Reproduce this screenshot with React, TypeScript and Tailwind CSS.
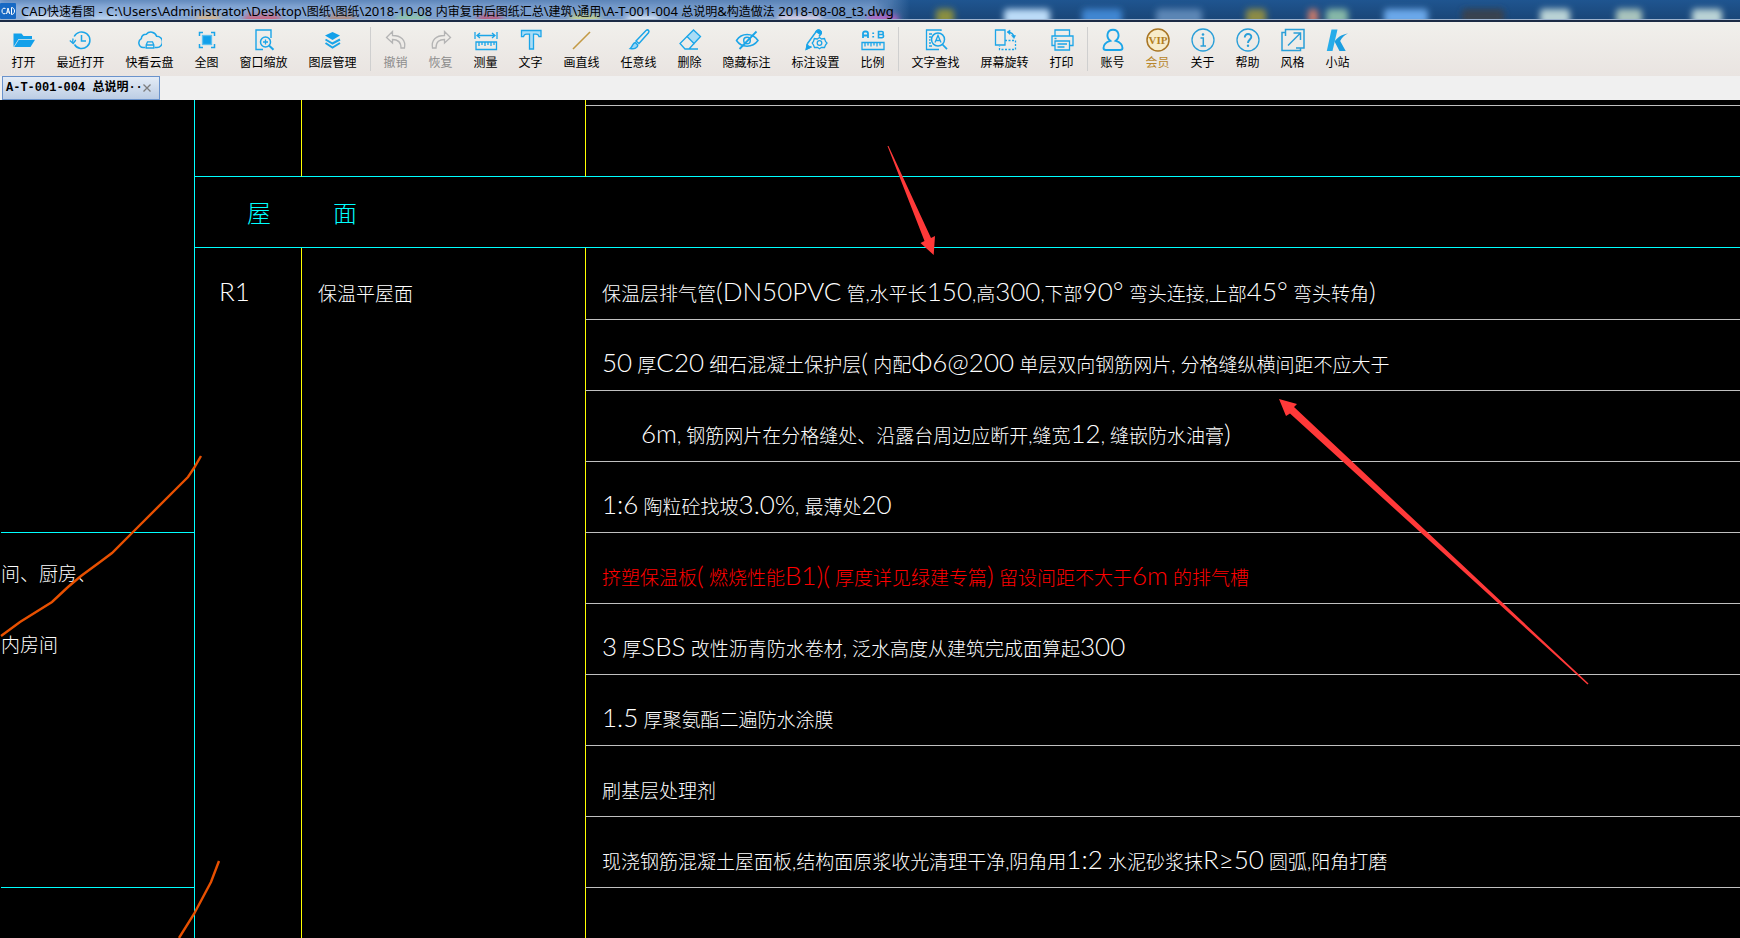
import { Fragment, type ReactNode } from "react";

type Tone = "normal" | "disabled" | "gold";

type Tool = {
  label: string;
  icon: ReactNode;
  tone?: Tone;
};

const TONES: Record<Tone, string> = {
  normal: "text-black",
  disabled: "text-[#8c8c8c]",
  gold: "text-[#b8862b]",
};

// button width depends on how many characters the label has
const WIDTHS: Record<number, string> = {
  2: "w-[45px]",
  3: "w-[57px]",
  4: "w-[69px]",
};

function Icon({ children, color = "#1ba5e8" }: { children: ReactNode; color?: string }) {
  return (
    <svg
      viewBox="0 0 24 24"
      className="h-6 w-6"
      fill="none"
      stroke={color}
      strokeWidth="1.3"
      aria-hidden="true"
    >
      {children}
    </svg>
  );
}

const GROUPS: Tool[][] = [
  [
    {
      label: "打开",
      icon: (
        <Icon>
          <path d="M1.5 19V5.5h8l2 2.5h8.500v3H6.500L1.500 19Z" fill="#12a0ea" stroke="none" />
          <path d="M6.800 11.800H23L18.500 19H2.200Z" fill="#12a0ea" stroke="none" />
        </Icon>
      ),
    },
    {
      label: "最近打开",
      icon: (
        <Icon>
          <path d="M5.200 8.500A8.300 8.300 0 1 1 5.500 16.500" strokeWidth="1.500" />
          <path d="M0.800 12.500 4.200 15.500 6.800 12" />
          <path d="M4 15c-.5-1.500-.3-3 .1-4.500" />
          <path d="M12.500 7v6h4.500" strokeWidth="1.500" />
        </Icon>
      ),
    },
    {
      label: "快看云盘",
      icon: (
        <Icon>
          <path
            d="M7.500 19.500H5.200A4.700 4.700 0 0 1 3.300 10.700 5 5 0 0 1 8.300 6.300 6 6 0 0 1 18.600 8.200 5.300 5.300 0 0 1 19 19.500H16.500"
            strokeWidth="1.500"
          />
          <path d="M8.200 20v-3l1.300-3.200h5l1.300 3.200v3ZM8.200 17h7.600" />
        </Icon>
      ),
    },
    {
      label: "全图",
      icon: (
        <Icon>
          <rect x="7.500" y="7.500" width="9" height="9" fill="#12a0ea" stroke="#5cc0f0" />
          <path d="M4.500 8V4.500H8M16 4.500h3.500V8M19.500 16v3.500H16M8 19.500H4.500V16" strokeWidth="1.500" />
        </Icon>
      ),
    },
    {
      label: "窗口缩放",
      icon: (
        <Icon>
          <path d="M11 21.500H4V2h15v8" strokeWidth="1.400" />
          <circle cx="13.500" cy="14" r="5" strokeWidth="1.500" />
          <path d="M11 14h5M13.500 11.500v5" />
          <path d="m17 17.500 4.500 4.200" strokeWidth="2" />
        </Icon>
      ),
    },
    {
      label: "图层管理",
      icon: (
        <Icon>
          <path d="m11.500 4 7.500 3.500-7.500 4.500L4 7.500Z" fill="#12a0ea" stroke="none" />
          <path d="M4.500 11.500 11.500 15.500 19 11.500M4.500 15 11.500 19.500 19 15" strokeWidth="2" />
        </Icon>
      ),
    },
  ],
  [
    {
      label: "撤销",
      tone: "disabled",
      icon: (
        <Icon color="#b4b4b4">
          <path d="M8.500 3.500 2.500 9.500 8.500 15V11.500c5 0 8.500 2 8.500 8.500h3.500C22 12 17 7.500 8.500 7.500Z" />
        </Icon>
      ),
    },
    {
      label: "恢复",
      tone: "disabled",
      icon: (
        <Icon color="#b4b4b4">
          <path d="M15.500 3.500 21.500 9.500 15.500 15V11.500c-5 0-8.500 2-8.500 8.500H3.500C2 12 7 7.500 15.500 7.500Z" />
        </Icon>
      ),
    },
    {
      label: "测量",
      icon: (
        <Icon>
          <path d="M1 4v7M23 4v7M3 7.500h18M6 5 3 7.500 6 10M18 5l3 2.500L18 10" />
          <path d="M2 14h20.500v7.500H2ZM5 14v4M8 14v3M11 14v4M14 14v3M17 14v4M20 14v3" />
        </Icon>
      ),
    },
    {
      label: "文字",
      icon: (
        <Icon>
          <path
            d="M2.500 2.500H22v6.200h-2c-.4-2-1.300-2.500-3-2.500h-2.500V21h-4V6.200H7.500c-1.700 0-2.500.5-3 2.500h-2Z"
            fill="#a9dcf6"
          />
        </Icon>
      ),
    },
    {
      label: "画直线",
      icon: (
        <Icon>
          <path d="M3 21 20 4" stroke="#c39a45" strokeWidth="1.600" />
        </Icon>
      ),
    },
    {
      label: "任意线",
      icon: (
        <Icon>
          <path d="M9 13 19 2.500c2-1.500 3.800.3 2.500 2.300L12 15.500Z" strokeWidth="1.500" />
          <path d="M8.300 14.500c-3 .5-2 3.500-5 6 4 .8 7.500-.5 7.500-3.500Z" fill="#9ad6f6" strokeWidth="1.500" />
        </Icon>
      ),
    },
    {
      label: "删除",
      icon: (
        <Icon>
          <path d="M9 8.500 15.500 2 22.500 8.500 16 15.500Z" fill="#a9dcf6" />
          <path d="m9 8.500-7 7 5 5.500h4l5-5.500M7 21h13" />
        </Icon>
      ),
    },
    {
      label: "隐藏标注",
      icon: (
        <Icon>
          <path d="M1.500 12.500c5-8 16-8 21.500 0-5.500 7.500-16.500 7.500-21.500 0Z" strokeWidth="1.500" />
          <circle cx="12" cy="12.500" r="3.300" strokeWidth="1.500" />
          <path d="M21.500 3.500 4.500 21" strokeWidth="1.800" />
        </Icon>
      ),
    },
    {
      label: "标注设置",
      icon: (
        <Icon>
          <path d="M3.500 15.500 13 2.500c2-1.500 5 .5 4.300 3L15 8.500M3.500 15.500 2.500 21l5-2.500" strokeWidth="1.500" />
          <path d="M13 2.500c2-1.500 5 .5 4.300 3l-1 1-4.300-3ZM3 17l-.8 4.500 4.300-2Z" fill="#12a0ea" />
          <path d="m15.500 9.500 2 1.500 3-.5 1 3 1.500 1.500-1.500 2-1 2.500-3-.2-2 1.500-2-1.500-3 .2-1-2.500L8.200 15l1.300-1.500.8-3 3 .5Z" />
          <circle cx="15.500" cy="15" r="2.300" />
        </Icon>
      ),
    },
    {
      label: "比例",
      icon: (
        <Icon>
          <path d="M2 10V5.500C2 4 2.800 3.500 4 3.500h1C6.300 3.500 7 4 7 5.500V10M2 7.500h5" strokeWidth="1.800" />
          <path d="M17.500 3.500h3.300c2 0 2 3 0 3h-3.300 3.600c2 0 2 3.200 0 3.200h-3.600Z" strokeWidth="1.600" />
          <path d="M12.200 4.500v1.500M12.200 8v1.500" strokeWidth="1.800" />
          <path d="M1 14.500h22v7H1ZM4 14.500v4M7 14.500v3M10 14.500v4M13 14.500v3M16 14.500v4M19 14.500v3" />
        </Icon>
      ),
    },
  ],
  [
    {
      label: "文字查找",
      icon: (
        <Icon>
          <path d="M17 3V2H2.500v19.500H15M5 6h3M5 9h2M5 12h1.500M5 15h2M5 18h3" />
          <circle cx="14" cy="11.500" r="6.500" strokeWidth="1.500" />
          <path d="M11 14.500 14 7.500l3 7M12 12.500h4" />
          <path d="m18.500 16.500 4.500 4.700" strokeWidth="1.800" />
        </Icon>
      ),
    },
    {
      label: "屏幕旋转",
      icon: (
        <Icon>
          <path d="M2.500 2h9.500v15H2.500Z" />
          <path d="M12 12.500h10.500v9H6.500V18" strokeDasharray="2 1.500" />
          <path d="M15 4c3.500.5 5.500 2 6 5" />
          <path d="m17 2-3 2 3 2.500ZM18.500 7.500h4L21 10.500Z" fill="#12a0ea" strokeWidth=".6" />
        </Icon>
      ),
    },
    {
      label: "打印",
      icon: (
        <Icon>
          <path d="M5 8V2h14.500v6M5 17.500H2V8h21v9.500h-3.500" />
          <path d="M5 13h14.500v9H5ZM7.500 16h9.500M7.500 19h7M4.500 10.500h2" />
        </Icon>
      ),
    },
  ],
  [
    {
      label: "账号",
      icon: (
        <Icon>
          <path
            d="M9.300 12.800C4.500 9 6 1.800 12 1.800S19.500 9 14.700 12.800c4 1.200 6.800 4.200 6.800 7.200 0 1.500-.8 2-2.500 2H5c-1.700 0-2.500-.5-2.500-2 0-3 2.800-6 6.800-7.200Z"
            strokeWidth="1.900"
          />
        </Icon>
      ),
    },
    {
      label: "会员",
      tone: "gold",
      icon: (
        <svg viewBox="0 0 24 24" className="h-6 w-6" aria-hidden="true">
          <circle cx="12" cy="12" r="11" fill="#f7eccb" stroke="#a87524" strokeWidth="1.500" />
          <text
            x="12"
            y="16"
            textAnchor="middle"
            fontSize="11"
            fontWeight="700"
            fontFamily="'Liberation Serif', serif"
            fill="#b3801f"
          >
            VIP
          </text>
        </svg>
      ),
    },
    {
      label: "关于",
      icon: (
        <Icon color="#2a9fd8">
          <circle cx="12" cy="12" r="11" />
          <path d="M9.500 10h2.800v8M9.500 18h5.500" strokeWidth="1.500" />
          <circle cx="12" cy="6.500" r="1.300" fill="#2a9fd8" stroke="none" />
        </Icon>
      ),
    },
    {
      label: "帮助",
      icon: (
        <Icon color="#2a9fd8">
          <circle cx="12" cy="12" r="11" />
          <path d="M8.800 9.500C8.500 5 15.500 5 15.300 9c0 2.500-3.300 2.700-3.300 6" strokeWidth="1.900" />
          <circle cx="12" cy="17.800" r="1.200" fill="#2a9fd8" stroke="none" />
        </Icon>
      ),
    },
    {
      label: "风格",
      icon: (
        <Icon color="#2a9fd8">
          <path d="M4.500 8V1.500H23V20h-8M19.500 20v2.500H1V4.500h3.500" strokeWidth="1.500" />
          <path d="M7 17.500 19 5.500M12.500 5H19.500v7" strokeWidth="1.500" />
        </Icon>
      ),
    },
    {
      label: "小站",
      icon: (
        <Icon>
          <path d="M5.500 1.500h6L6.500 23H.8Z" fill="#27ace9" stroke="none" />
          <path
            d="M22 5.500C15 6.500 11 10 8.500 13.500l5 9.500h6.200l-5.500-10C16 9.500 18.500 7 22 5.500Z"
            fill="#1b9ee0"
            stroke="none"
          />
        </Icon>
      ),
    },
  ],
];

const LAYERS = [
  { text: "保温层排气管(DN50PVC 管,水平长150,高300,下部90° 弯头连接,上部45° 弯头转角)" },
  { text: "50 厚C20 细石混凝土保护层( 内配Φ6@200 单层双向钢筋网片, 分格缝纵横间距不应大于" },
  { text: "6m, 钢筋网片在分格缝处、沿露台周边应断开,缝宽12, 缝嵌防水油膏)", indent: true },
  { text: "1:6 陶粒砼找坡3.0%, 最薄处20" },
  { text: "挤塑保温板( 燃烧性能B1)( 厚度详见绿建专篇) 留设间距不大于6m 的排气槽", red: true },
  { text: "3 厚SBS 改性沥青防水卷材, 泛水高度从建筑完成面算起300" },
  { text: "1.5 厚聚氨酯二遍防水涂膜" },
  { text: "刷基层处理剂" },
  { text: "现浇钢筋混凝土屋面板,结构面原浆收光清理干净,阴角用1:2 水泥砂浆抹R≥50 圆弧,阳角打磨" },
];

/** Drawing text: latin letters and digits are set larger than the hanzi */
function CadText({ children }: { children: string }) {
  return (
    <span className="text-[26px] font-light leading-8 whitespace-nowrap">
      {children.split(/([^0-9A-Za-z@Φ°%≥.:()]+)/).map((run, i) =>
        i % 2 ? (
          <span key={i} className="text-[19px] whitespace-pre">
            {run}
          </span>
        ) : (
          <Fragment key={i}>{run}</Fragment>
        )
      )}
    </span>
  );
}

// desktop icons shining through the glass title bar
const GLOW = [
  { x: 26, w: 40, c: "#dfe9f7" },
  { x: 92, w: 30, c: "#bcd6f2" },
  { x: 196, w: 24, c: "#e0b98c" },
  { x: 244, w: 36, c: "#d2617a" },
  { x: 328, w: 26, c: "#b58b7a" },
  { x: 396, w: 30, c: "#8fc9a8" },
  { x: 478, w: 24, c: "#c0577a" },
  { x: 570, w: 30, c: "#c8d58c" },
  { x: 626, w: 34, c: "#d7e4f5" },
  { x: 778, w: 44, c: "#e2d6ea" },
  { x: 868, w: 30, c: "#b85fc4" },
  { x: 936, w: 18, c: "#8a8f3f" },
  { x: 1004, w: 46, c: "#bcdcf8" },
  { x: 1082, w: 40, c: "#3f86d2" },
  { x: 1156, w: 46, c: "#5b86b5" },
  { x: 1246, w: 20, c: "#8c8b45" },
  { x: 1308, w: 10, c: "#c97a6a" },
  { x: 1326, w: 22, c: "#86b8a8" },
  { x: 1384, w: 44, c: "#6aa8ea" },
  { x: 1462, w: 42, c: "#39424f" },
  { x: 1540, w: 30, c: "#b9d3d6" },
  { x: 1616, w: 26, c: "#a9c4bd" },
  { x: 1692, w: 30, c: "#b9d3d6" },
];

const TITLE =
  "CAD快速看图 - C:\\Users\\Administrator\\Desktop\\图纸\\图纸\\2018-10-08 内审复审后图纸汇总\\建筑\\通用\\A-T-001-004 总说明&构造做法 2018-08-08_t3.dwg";

function TitleBar() {
  return (
    <header className="relative flex h-[22px] items-center overflow-hidden border-b-2 border-[#1c2b45] bg-linear-to-b from-[#1f5590] to-[#1a4678] pt-[2px]">
      <svg className="absolute inset-0 h-full w-full" aria-hidden="true">
        <defs>
          <filter id="soft" x="-50%" y="-50%" width="200%" height="200%">
            <feGaussianBlur stdDeviation="3" />
          </filter>
          <linearGradient id="halo" x1="0" x2="1">
            <stop offset="0" stopColor="#8fb0dc" />
            <stop offset=".5" stopColor="#7c9fce" />
            <stop offset=".96" stopColor="#6f95c6" />
            <stop offset="1" stopColor="#6f95c6" stopOpacity="0" />
          </linearGradient>
        </defs>
        <rect width="910" height="22" fill="url(#halo)" />
        <g filter="url(#soft)">
          <rect y="-3" width="890" height="5" fill="#4a74ac" />
          {GLOW.map((g) => (
            <rect key={g.x} x={g.x} y={g.x < 900 ? 15 : 9} width={g.w} height="16" rx="4" fill={g.c} />
          ))}
        </g>
        <path d="M0 19.500H1740" stroke="#9fb4cf" />
      </svg>
      <svg viewBox="0 0 16 16" className="relative h-4 w-4" aria-hidden="true">
        <rect width="16" height="16" rx="1" fill="#1769c4" />
        <path
          d="M5.500 5.500C3 4.500 2 6 2 8s1 3.500 3.500 2.500M6.500 11 8 5l1.800 6M7 9h2.300M11.500 4.500v7c4 0 4-7 0-7"
          fill="none"
          stroke="#fff"
        />
      </svg>
      <h1 className="relative ml-[5px] text-[13px] leading-5 whitespace-nowrap text-black">
        {TITLE.split(/([\u4e00-\u9fff]+)/).map((run, i) =>
          i % 2 ? (
            <span key={i} className="text-[12px]">
              {run}
            </span>
          ) : (
            <Fragment key={i}>{run}</Fragment>
          )
        )}
      </h1>
    </header>
  );
}

function Toolbar() {
  return (
    <nav
      aria-label="工具栏"
      className="flex h-[54px] bg-linear-to-b from-[#f1f0ec] to-[#e9e4e1] pl-px"
    >
      {GROUPS.map((group, i) => (
        <Fragment key={i}>
          {i > 0 && (
            <div className="flex w-[6px] shrink-0 justify-center py-[5px]">
              <div className="w-px bg-[#cfcfcf]" />
            </div>
          )}
          {group.map((tool) => (
            <button
              key={tool.label}
              type="button"
              disabled={tool.tone === "disabled"}
              className={`flex shrink-0 flex-col items-center gap-[3px] pt-[6px] text-[12px] leading-4 whitespace-nowrap ${
                WIDTHS[tool.label.length]
              } ${TONES[tool.tone ?? "normal"]}`}
            >
              {tool.icon}
              {tool.label}
            </button>
          ))}
        </Fragment>
      ))}
    </nav>
  );
}

function TabBar() {
  return (
    <div className="flex h-6 bg-[#f0f0f0] pl-[2px]">
      <div className="flex w-[158px] items-center justify-between border border-[#6a93cc] bg-linear-to-b from-[#e4ecf6] to-[#bccde4] pr-2 pl-[3px]">
        <span className="font-['Liberation_Mono','Noto_Sans_CJK_SC',monospace] text-[12px] font-bold whitespace-nowrap">
          A-T-001-004 总说明··
        </span>
        <button type="button" aria-label="关闭" className="text-[#7d7d7d]">
          <svg viewBox="0 0 8 8" className="h-2 w-2" stroke="currentColor" strokeWidth="1.300">
            <path d="m.5.5 7 7M7.500.5l-7 7" />
          </svg>
        </button>
      </div>
    </div>
  );
}

function Drawing() {
  return (
    <main className="relative flex grow overflow-hidden bg-black text-white font-['Lato','Noto_Sans_CJK_SC',sans-serif]">
      <section className="flex w-[194px] shrink-0 flex-col pl-px">
        <div className="h-[433px] border-b border-[#00ffff]" />
        <div className="h-[355px] border-b border-[#00ffff]">
          <p className="flex h-[71px] items-center pt-2">
            <CadText>间、厨房、</CadText>
          </p>
          <p className="flex h-[71px] items-center pt-2">
            <CadText>内房间</CadText>
          </p>
        </div>
      </section>

      <table className="grow table-fixed border-separate border-spacing-0 border-l border-[#00ffff] text-left">
        <colgroup>
          <col className="w-[106px]" />
          <col className="w-[284px]" />
          <col />
        </colgroup>
        <tbody className="align-top">
          <tr className="h-[6px]">
            <td rowSpan={2} className="border-b border-[#00ffff] p-0" />
            <td rowSpan={2} className="border-b border-l border-b-[#00ffff] border-l-[#ffff00] p-0" />
            <td className="border-b border-l border-b-[#c0c0c0] border-l-[#ffff00] p-0" />
          </tr>
          <tr className="h-[71px]">
            <td className="border-b border-l border-b-[#00ffff] border-l-[#ffff00] p-0" />
          </tr>
          <tr className="h-[71px]">
            <th
              colSpan={3}
              className="border-b border-[#00ffff] p-0 pt-[20px] pl-[52px] text-[24px] leading-8 font-light text-[#00ffff]"
            >
              <span className="flex gap-[62px]">
                <span>屋</span>
                <span>面</span>
              </span>
            </th>
          </tr>
          {LAYERS.map((layer, i) => (
            <tr key={i} className={i === 0 ? "h-[72px]" : "h-[71px]"}>
              {i === 0 && (
                <>
                  <th rowSpan={LAYERS.length + 1} className="p-0 pt-[27px] pl-[24px]">
                    <CadText>R1</CadText>
                  </th>
                  <td rowSpan={LAYERS.length + 1} className="border-l border-[#ffff00] p-0 pt-[27px] pl-4">
                    <CadText>保温平屋面</CadText>
                  </td>
                </>
              )}
              <td
                className={`border-b border-l border-b-[#c0c0c0] border-l-[#ffff00] p-0 ${
                  i === 0 ? "pt-[27px]" : "pt-[26px]"
                } ${layer.indent ? "pl-[55px]" : "pl-4"} ${layer.red ? "text-[#ff0000]" : ""}`}
              >
                <CadText>{layer.text}</CadText>
              </td>
            </tr>
          ))}
          <tr>
            <td className="border-l border-[#ffff00] p-0" />
          </tr>
        </tbody>
      </table>

      {/* freehand marks and arrows over the sheet */}
      <svg
        viewBox="0 0 1740 838"
        className="pointer-events-none absolute top-0 left-0 h-[838px] w-[1740px]"
        aria-hidden="true"
      >
        <g fill="none" stroke="#e85000" strokeWidth="2.4">
          <path d="M201 356 194 368 188 377 179 386 133 432 112 453 100 462 81 476 68 487 52 502 20 522 1 536" />
          <path d="M219 761 211 782 194 814 179 838" />
        </g>
        <g fill="#ff3939">
          <path d="m887.500 46 37 95-4 2 13.200 12 1.300-19-4 2-42.500-92Z" />
          <path d="m1279 299 18 5-3 3 294.500 276.500-1 1L1290 313.500l-4 2.500Z" />
        </g>
      </svg>
    </main>
  );
}

export default function App() {
  return (
    <div className="flex min-h-screen flex-col overflow-hidden font-['Noto_Sans','Noto_Sans_CJK_SC',sans-serif]">
      <TitleBar />
      <Toolbar />
      <TabBar />
      <Drawing />
    </div>
  );
}
